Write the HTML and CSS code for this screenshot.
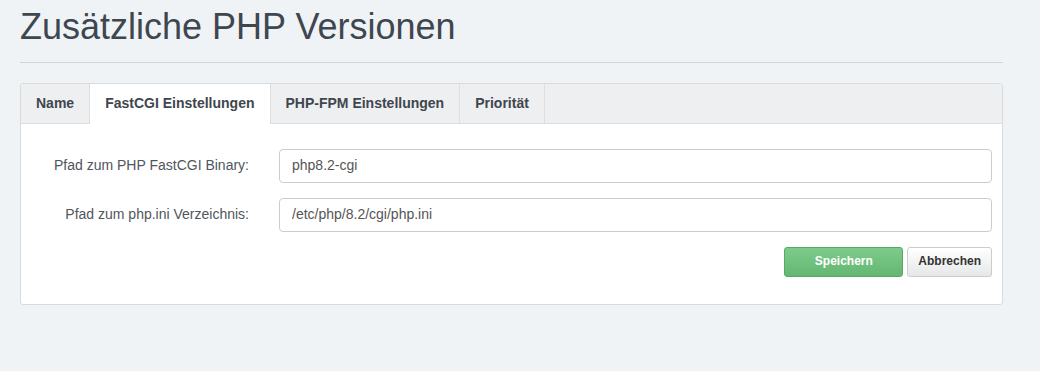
FILE: index.html
```html
<!DOCTYPE html>
<html lang="de">
  <head>
    <meta charset="UTF-8" />
    <title>Zusätzliche PHP Versionen</title>
    <link rel="stylesheet" href="styles.css">
  </head>
  <body>
    <div class="content">
      <h1 class="page-title">Zusätzliche PHP Versionen</h1>
      <div class="panel">
        <ul class="tabs">
          <li>Name</li>
          <li class="active">FastCGI Einstellungen</li>
          <li>PHP-FPM Einstellungen</li>
          <li>Priorität</li>
        </ul>
        <form class="panel-body">
          <div class="row">
            <label>Pfad zum PHP FastCGI Binary:</label>
            <input type="text" value="php8.2-cgi" />
          </div>
          <div class="row">
            <label>Pfad zum php.ini Verzeichnis:</label>
            <input type="text" value="/etc/php/8.2/cgi/php.ini" />
          </div>
          <div class="buttons">
            <button type="button" class="btn btn-save">Speichern</button>
            <button type="button" class="btn">Abbrechen</button>
          </div>
        </form>
      </div>
    </div>
  </body>
</html>
```

FILE: styles.css
```css
* {
  margin: 0;
  padding: 0;
  box-sizing: border-box;
}
ul {
  list-style: none;
}
body {
  background-color: #f0f3f6;
  font-family: "Liberation Sans", Arial, sans-serif;
  font-size: 14px;
  color: #555;
}
.content {
  width: 983px;
  margin-left: 20px;
  padding-top: 7px;
}
.page-title {
  font-size: 36px;
  font-weight: normal;
  line-height: 40px;
  color: #3e474f;
  padding-bottom: 15px;
  border-bottom: 1px solid #d2d5d8;
  margin-bottom: 20px;
}
.panel {
  background-color: #fff;
  border: 1px solid #d8dbde;
  border-radius: 3px;
}
.tabs {
  display: flex;
  height: 40px;
  background-color: #eeeff1;
  border-bottom: 1px solid #dcdee0;
  border-radius: 3px 3px 0 0;
}
.tabs li {
  display: flex;
  align-items: center;
  padding: 0 15px 2px;
  font-weight: bold;
  font-size: 14px;
  color: #3f464d;
  border-right: 1px solid #dcdee0;
}
.tabs li.active {
  background-color: #fff;
  margin-bottom: -1px;
}
.panel-body {
  padding: 25px 10px 27px 0;
}
.row {
  display: flex;
  align-items: center;
  margin-bottom: 15px;
}
.row label {
  width: 228px;
  text-align: right;
  margin-right: 30px;
  padding-bottom: 2px;
  color: #50565c;
}
.row input {
  flex: 1;
  height: 34px;
  padding: 0 12px 2px;
  border: 1px solid #ccc;
  border-radius: 4px;
  font-family: inherit;
  font-size: 14px;
  color: #555;
}
.buttons {
  display: flex;
  justify-content: flex-end;
  gap: 4px;
}
.btn {
  height: 30px;
  padding: 0 10px 2px;
  font-family: inherit;
  font-size: 12px;
  font-weight: bold;
  color: #333;
  background: linear-gradient(#fff, #e6e7e9);
  border: 1px solid #ccc;
  border-radius: 3px;
}
.btn-save {
  width: 119px;
  color: #fff;
  background: linear-gradient(#7dcb8a, #65b673);
  border-color: #5aa865;
}
```
